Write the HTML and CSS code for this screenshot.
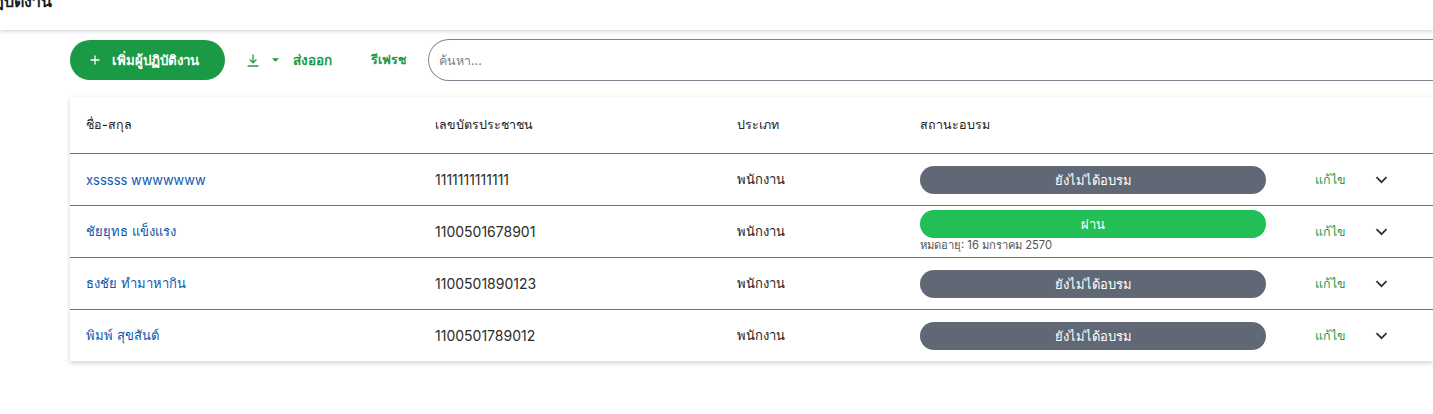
FILE: index.html
```html
<!DOCTYPE html>
<html lang="th">
<head>
<meta charset="utf-8">
<title>ผู้ปฏิบัติงาน</title>
<link rel="stylesheet" href="styles.css">
</head>
<body>
<header class="topbar"><h1 class="title">ผู้ปฏิบัติงาน</h1></header>
<main class="content">
  <div class="toolbar">
    <button class="btn-add"><svg class="i-plus" viewBox="0 0 10 10"><path d="M5 .5v9M.5 5h9"/></svg><span>เพิ่มผู้ปฏิบัติงาน</span></button>
    <button class="btn-text btn-export">
      <svg class="i-dl" viewBox="0 0 12 13"><path d="M6 .5v8.2M2.6 5.4L6 8.8l3.4-3.4M.6 12h10.8"/></svg>
      <svg class="i-caret" viewBox="0 0 8 4"><path d="M0 0h8L4 4z"/></svg>
      <span>ส่งออก</span>
    </button>
    <button class="btn-text btn-refresh">รีเฟรช</button>
    <input class="search" type="text" placeholder="ค้นหา...">
  </div>
  <section class="table">
    <div class="row head">
      <div>ชื่อ-สกุล</div><div>เลขบัตรประชาชน</div><div>ประเภท</div><div>สถานะอบรม</div>
    </div>
    <div class="row">
      <a class="name">xsssss wwwwwww</a><div class="id">1111111111111</div><div>พนักงาน</div>
      <div class="status"><div class="pill gray">ยังไม่ได้อบรม</div></div>
      <a class="edit">แก้ไข</a><svg class="chev" viewBox="0 0 12 8"><path d="M1 1.2l5 5 5-5"/></svg>
    </div>
    <div class="row">
      <a class="name">ชัยยุทธ แข็งแรง</a><div class="id">1100501678901</div><div>พนักงาน</div>
      <div class="status"><div class="pill green">ผ่าน</div><div class="expiry">หมดอายุ: 16 มกราคม 2570</div></div>
      <a class="edit">แก้ไข</a><svg class="chev" viewBox="0 0 12 8"><path d="M1 1.2l5 5 5-5"/></svg>
    </div>
    <div class="row">
      <a class="name">ธงชัย ทำมาหากิน</a><div class="id">1100501890123</div><div>พนักงาน</div>
      <div class="status"><div class="pill gray">ยังไม่ได้อบรม</div></div>
      <a class="edit">แก้ไข</a><svg class="chev" viewBox="0 0 12 8"><path d="M1 1.2l5 5 5-5"/></svg>
    </div>
    <div class="row last">
      <a class="name">พิมพ์ สุขสันต์</a><div class="id">1100501789012</div><div>พนักงาน</div>
      <div class="status"><div class="pill gray">ยังไม่ได้อบรม</div></div>
      <a class="edit">แก้ไข</a><svg class="chev" viewBox="0 0 12 8"><path d="M1 1.2l5 5 5-5"/></svg>
    </div>
  </section>
</main>
</body>
</html>
```
FILE: styles.css
```css
* { box-sizing: border-box; }
html, body { margin: 0; height: 100%; overflow: hidden; background: #fff; }
body { font-family: Inter, "Noto Sans", sans-serif; font-size: 13px; color: #222; }
.topbar { height: 30px; background: #fff; box-shadow: 0 1px 4px rgba(70,75,100,.28); overflow: hidden; }
.title { margin: -13px 0 0 -26px; font-size: 16px; line-height: 28px; font-weight: 700; color: #1f1f1f; }
.content { padding: 9px 0 0 70px; }
.toolbar { display: flex; align-items: center; height: 42px; }
button { font: inherit; border: 0; background: none; padding: 0; }
.btn-add { display: flex; align-items: center; height: 40px; width: 155px; padding-left: 20px; border-radius: 20px; background: #1a9a45; color: #fff; font-size: 13.3px; font-weight: 700; }
.i-plus { width: 10px; height: 10px; margin-right: 12px; fill: none; stroke: #fff; stroke-width: 1.3; }
.btn-text { color: #1a9a45; font-size: 13.5px; font-weight: 700; display: flex; align-items: center; }
.btn-export { margin-left: 22px; }
.i-dl { width: 12px; height: 13px; fill: none; stroke: #1a9a45; stroke-width: 1.3; margin-right: 13px; }
.i-caret { width: 7px; height: 4px; fill: #1a9a45; margin-right: 14px; }
.btn-refresh { margin-left: 39px; font-size: 12.5px; }
.search { margin-left: 22px; flex: 1; height: 42px; border: 1px solid #7d8491; border-right: 0; border-radius: 21px 0 0 21px; padding: 0 0 0 10px; font: inherit; font-size: 12.5px; outline: 0; }
.search::placeholder { color: #7b7f87; }
.table { margin-top: 16px; background: #fff; box-shadow: 0 2px 5px rgba(0,0,0,.18); }
.row { display: grid; grid-template-columns: 349px 302px 183px 378px 93px 1fr; align-items: center; height: 52px; border-bottom: 1px solid #6f6f6f; }
.row > div, .row > a { padding-left: 16px; }
.row.head { height: 57px; font-size: 12.5px; font-weight: 500; }
.row.last { height: 51px; border-bottom: 0; }
.name { color: #0b57b0; }
.id { font-size: 14px; color: #2b2b2b; }
.status { padding-right: 16px; }
.pill { height: 28px; line-height: 28px; border-radius: 14px; text-align: center; color: #fff; font-size: 13px; }
.gray { background: #616875; }
.green { background: #22bf57; }
.expiry { font-size: 11.2px; line-height: 14px; color: #555; }
.status:has(.expiry) { align-self: start; padding-top: 4px; }
.edit { color: #1f9c49; font-size: 12.5px; font-weight: 500; padding-left: 33px !important; }
.chev { width: 13px; height: 8px; fill: none; stroke: #333; stroke-width: 1.8; }
```
